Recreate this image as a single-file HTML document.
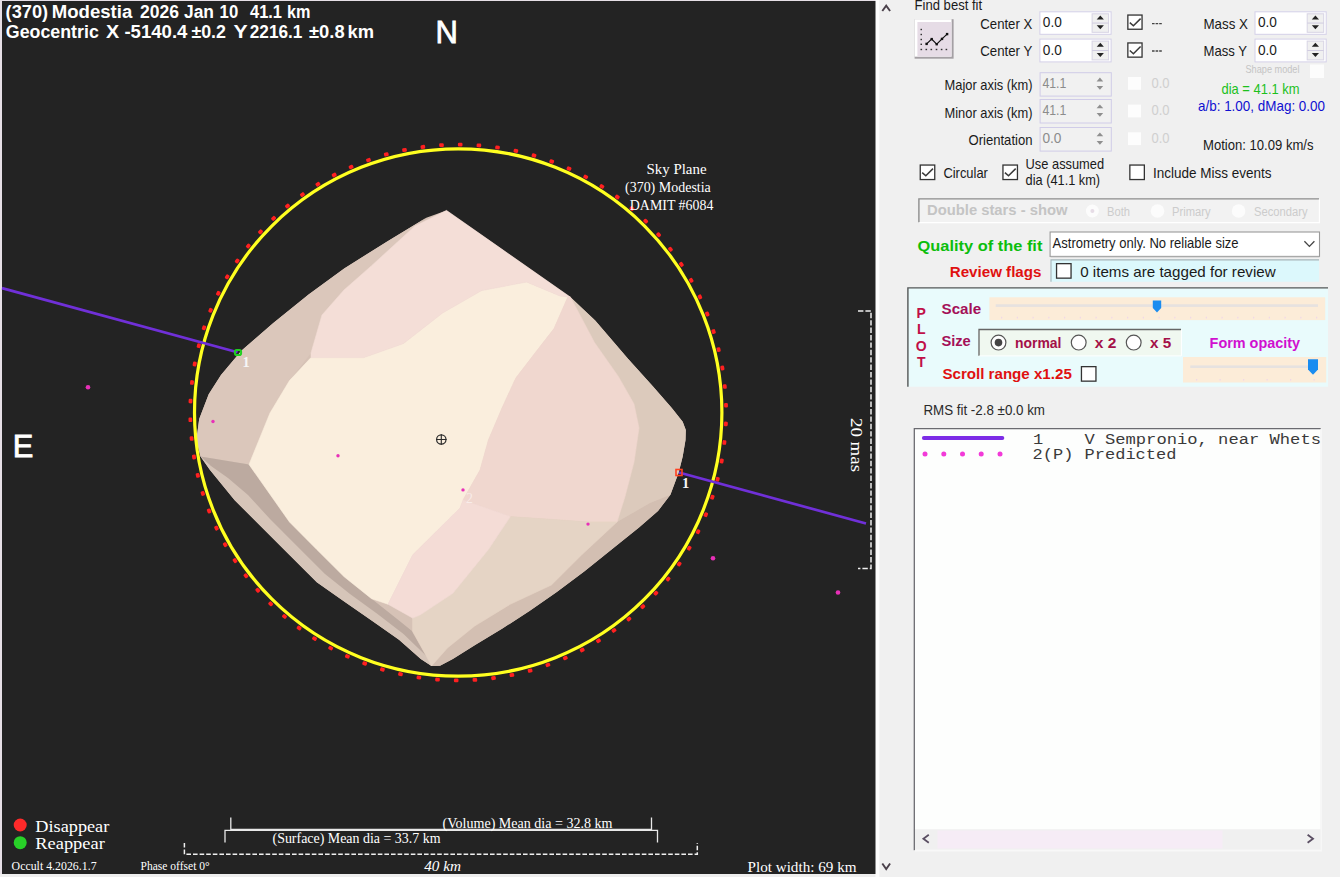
<!DOCTYPE html>
<html>
<head>
<meta charset="utf-8">
<title>Occult - Asteroid plot</title>
<style>
html,body{margin:0;padding:0;background:#f0f0f0;overflow:hidden;}
body{width:1340px;height:877px;position:relative;font-family:"Liberation Sans",sans-serif;}
svg{position:absolute;left:0;top:0;display:block;}
.ss{font-family:"Liberation Sans",sans-serif;}
.sf{font-family:"Liberation Serif",serif;}
.mo{font-family:"Liberation Mono",monospace;}
</style>
</head>
<body>
<svg width="1340" height="877" viewBox="0 0 1340 877">
<!-- ===== page background ===== -->
<rect x="0" y="0" width="1340" height="877" fill="#f0f0f0"/>
<!-- ===== plot background ===== -->
<rect x="2" y="1" width="874" height="873" fill="#232323"/>
<rect x="0" y="0" width="2" height="877" fill="#e6dfe6"/>
<rect x="0" y="0" width="876" height="1" fill="#e6dfe6"/>
<rect x="0" y="874" width="876" height="3" fill="#eeeeee"/>

<g shape-rendering="geometricPrecision">
<polygon points="446.5,210.4 502.0,249.3 570.5,297.2 595.2,320.4 628.0,358.7 652.6,386.0 671.8,408.0 682.7,421.7 685.8,430.0 685.5,440.0 682.7,456.4 678.6,472.8 670.4,494.7 658.0,511.0 639.0,527.6 611.6,549.5 584.2,571.4 556.8,592.0 529.5,611.0 502.0,628.8 474.7,645.3 452.8,659.0 440.0,665.8 431.5,666.0 420.8,659.0 399.0,639.8 371.6,620.6 344.2,601.5 316.8,582.3 289.5,555.0 262.0,527.6 234.7,500.2 210.0,470.0 200.5,456.4 196.4,440.0 199.2,419.0 208.7,394.3 221.0,375.0 241.6,350.5 273.0,323.2 308.6,294.4 344.2,268.4 388.0,241.0 426.3,217.8" fill="#d6c2b6"/>
<polygon points="200.5,456.4 196.4,440.0 199.2,419.0 208.7,394.3 221.0,375.0 241.6,350.5 273.0,323.2 308.6,294.4 344.2,268.4 388.0,241.0 426.3,217.8 415.0,226.0 371.6,265.7 344.0,290.0 322.0,315.0 311.0,353.0 289.5,380.6 270.0,413.0 259.0,440.0 249.0,464.5" fill="#dbc7bb"/>
<polygon points="431.5,666.0 420.8,659.0 399.0,639.8 371.6,620.6 344.2,601.5 316.8,582.3 289.5,555.0 262.0,527.6 234.7,500.2 210.0,470.0 200.5,456.4 249.0,464.5 289.5,522.0 316.8,549.5 344.2,576.8 371.6,598.7 399.0,620.6 412.6,631.6 426.3,656.0 431.5,666.0" fill="#d6c5b9"/>
<polygon points="200.5,456.4 249.0,464.5 289.5,522.0 316.8,549.5 344.2,576.8 371.6,598.7 399.0,620.6 412.6,631.6 426.3,656.0 403.5,634.0 377.5,614.0 350.0,594.0 325.0,574.0 297.7,546.7 270.0,519.0 248.0,495.0 228.0,478.0 211.0,466.0" fill="#bcaaa0"/>
<polygon points="670.4,494.7 658.0,511.0 639.0,527.6 611.6,549.5 584.2,571.4 556.8,592.0 529.5,611.0 502.0,628.8 474.7,645.3 452.8,659.0 440.0,665.8 431.5,666.0 431.5,666.0 447.4,648.0 474.7,626.0 510.3,604.2 551.4,585.0 581.5,555.0 617.0,522.0 650.0,503.0 670.4,494.7" fill="#d3bfb2"/>
<polygon points="570.5,297.2 595.2,320.4 628.0,358.7 652.6,386.0 671.8,408.0 682.7,421.7 685.8,430.0 685.5,440.0 682.7,456.4 678.6,472.8 670.4,494.7 650.0,503.0 617.0,522.0 625.0,496.6 634.0,462.0 639.0,428.0 634.0,404.0 618.5,376.7 594.5,342.5 570.5,297.2" fill="#dccabc"/>
<polygon points="249.0,464.5 259.0,440.0 270.0,413.0 289.5,380.6 311.0,357.6 364.0,357.6 403.5,343.6 442.6,313.0 481.7,290.6 526.4,282.0 560.0,296.0 567.8,297.0 554.0,328.6 535.0,353.0 515.8,378.0 502.0,408.0 488.4,440.0 480.0,470.0 463.0,500.0 460.0,508.0 412.6,555.0 388.0,604.2 371.6,598.7 344.2,576.8 316.8,549.5 289.5,522.0" fill="#faeedd" stroke="#faeedd" stroke-width="0.6"/>
<polygon points="415.0,226.0 446.5,210.4 502.0,249.3 570.5,297.2 560.0,296.0 526.4,282.0 481.7,290.6 442.6,313.0 403.5,343.6 364.0,357.6 311.0,357.6 311.0,353.0 322.0,315.0 344.0,290.0 371.6,265.7" fill="#f4ded7" stroke="#f4ded7" stroke-width="0.6"/>
<polygon points="570.5,297.2 567.8,297.0 554.0,328.6 535.0,353.0 515.8,378.0 502.0,408.0 488.4,440.0 480.0,470.0 463.0,500.0 510.3,516.6 590.0,522.0 617.0,522.0 625.0,496.6 634.0,462.0 639.0,428.0 634.0,404.0 618.5,376.7 594.5,342.5 570.5,297.2" fill="#f0d7cf" stroke="#f0d7cf" stroke-width="0.6"/>
<polygon points="510.3,516.6 590.0,522.0 617.0,522.0 581.5,555.0 551.4,585.0 510.3,604.2 474.7,626.0 447.4,648.0 431.5,666.0 426.3,656.0 412.6,631.6 412.6,618.0 420.0,615.0 452.8,593.3 488.4,549.5" fill="#e5d4c5" stroke="#e5d4c5" stroke-width="0.6"/>
<polygon points="463.0,500.0 510.3,516.6 488.4,549.5 452.8,593.3 420.0,615.0 412.6,618.0 388.0,604.2 412.6,555.0 460.0,508.0" fill="#f4dcd6" stroke="#f4dcd6" stroke-width="0.6"/>
</g>
<circle cx="458.2" cy="412.5" r="263.7" fill="none" stroke="#ffff20" stroke-width="3.2"/>
<rect x="457.9" y="142.7" width="4.6" height="3.8" rx="1.2" fill="#ff2020" transform="rotate(0.4 460.2 144.6)"/>
<rect x="439.2" y="143.2" width="4.6" height="3.8" rx="1.2" fill="#ff2020" transform="rotate(-3.6 441.5 145.1)"/>
<rect x="420.6" y="145.0" width="4.6" height="3.8" rx="1.2" fill="#ff2020" transform="rotate(-7.6 422.9 146.9)"/>
<rect x="402.2" y="148.1" width="4.6" height="3.8" rx="1.2" fill="#ff2020" transform="rotate(-11.6 404.5 150.0)"/>
<rect x="384.0" y="152.5" width="4.6" height="3.8" rx="1.2" fill="#ff2020" transform="rotate(-15.6 386.3 154.4)"/>
<rect x="366.2" y="158.2" width="4.6" height="3.8" rx="1.2" fill="#ff2020" transform="rotate(-19.6 368.5 160.1)"/>
<rect x="348.8" y="165.1" width="4.6" height="3.8" rx="1.2" fill="#ff2020" transform="rotate(-23.6 351.1 167.0)"/>
<rect x="331.9" y="173.1" width="4.6" height="3.8" rx="1.2" fill="#ff2020" transform="rotate(-27.6 334.2 175.0)"/>
<rect x="315.6" y="182.3" width="4.6" height="3.8" rx="1.2" fill="#ff2020" transform="rotate(-31.6 317.9 184.2)"/>
<rect x="300.1" y="192.7" width="4.6" height="3.8" rx="1.2" fill="#ff2020" transform="rotate(-35.6 302.4 194.6)"/>
<rect x="285.2" y="204.1" width="4.6" height="3.8" rx="1.2" fill="#ff2020" transform="rotate(-39.6 287.5 206.0)"/>
<rect x="271.3" y="216.5" width="4.6" height="3.8" rx="1.2" fill="#ff2020" transform="rotate(-43.6 273.6 218.4)"/>
<rect x="258.2" y="229.9" width="4.6" height="3.8" rx="1.2" fill="#ff2020" transform="rotate(-47.6 260.5 231.8)"/>
<rect x="246.0" y="244.1" width="4.6" height="3.8" rx="1.2" fill="#ff2020" transform="rotate(-51.6 248.3 246.0)"/>
<rect x="234.9" y="259.1" width="4.6" height="3.8" rx="1.2" fill="#ff2020" transform="rotate(-55.6 237.2 261.0)"/>
<rect x="224.9" y="274.9" width="4.6" height="3.8" rx="1.2" fill="#ff2020" transform="rotate(-59.6 227.2 276.8)"/>
<rect x="216.0" y="291.4" width="4.6" height="3.8" rx="1.2" fill="#ff2020" transform="rotate(-63.6 218.3 293.3)"/>
<rect x="208.3" y="308.4" width="4.6" height="3.8" rx="1.2" fill="#ff2020" transform="rotate(-67.6 210.6 310.3)"/>
<rect x="201.7" y="325.9" width="4.6" height="3.8" rx="1.2" fill="#ff2020" transform="rotate(-71.6 204.0 327.8)"/>
<rect x="196.5" y="343.8" width="4.6" height="3.8" rx="1.2" fill="#ff2020" transform="rotate(-75.6 198.8 345.7)"/>
<rect x="192.4" y="362.1" width="4.6" height="3.8" rx="1.2" fill="#ff2020" transform="rotate(-79.6 194.7 364.0)"/>
<rect x="189.7" y="380.6" width="4.6" height="3.8" rx="1.2" fill="#ff2020" transform="rotate(-83.6 192.0 382.5)"/>
<rect x="188.2" y="399.2" width="4.6" height="3.8" rx="1.2" fill="#ff2020" transform="rotate(-87.6 190.5 401.1)"/>
<rect x="188.1" y="417.9" width="4.6" height="3.8" rx="1.2" fill="#ff2020" transform="rotate(-91.6 190.4 419.8)"/>
<rect x="189.3" y="436.6" width="4.6" height="3.8" rx="1.2" fill="#ff2020" transform="rotate(-95.6 191.6 438.5)"/>
<rect x="191.7" y="455.1" width="4.6" height="3.8" rx="1.2" fill="#ff2020" transform="rotate(-99.6 194.0 457.0)"/>
<rect x="195.5" y="473.5" width="4.6" height="3.8" rx="1.2" fill="#ff2020" transform="rotate(-103.6 197.8 475.4)"/>
<rect x="200.5" y="491.5" width="4.6" height="3.8" rx="1.2" fill="#ff2020" transform="rotate(-107.6 202.8 493.4)"/>
<rect x="206.8" y="509.1" width="4.6" height="3.8" rx="1.2" fill="#ff2020" transform="rotate(-111.6 209.1 511.0)"/>
<rect x="214.2" y="526.2" width="4.6" height="3.8" rx="1.2" fill="#ff2020" transform="rotate(-115.6 216.5 528.1)"/>
<rect x="222.9" y="542.8" width="4.6" height="3.8" rx="1.2" fill="#ff2020" transform="rotate(-119.6 225.2 544.7)"/>
<rect x="232.7" y="558.7" width="4.6" height="3.8" rx="1.2" fill="#ff2020" transform="rotate(-123.6 235.0 560.6)"/>
<rect x="243.6" y="573.9" width="4.6" height="3.8" rx="1.2" fill="#ff2020" transform="rotate(-127.6 245.9 575.8)"/>
<rect x="255.5" y="588.4" width="4.6" height="3.8" rx="1.2" fill="#ff2020" transform="rotate(-131.6 257.8 590.3)"/>
<rect x="268.4" y="601.9" width="4.6" height="3.8" rx="1.2" fill="#ff2020" transform="rotate(-135.6 270.7 603.8)"/>
<rect x="282.2" y="614.5" width="4.6" height="3.8" rx="1.2" fill="#ff2020" transform="rotate(-139.6 284.5 616.4)"/>
<rect x="296.8" y="626.1" width="4.6" height="3.8" rx="1.2" fill="#ff2020" transform="rotate(-143.6 299.1 628.0)"/>
<rect x="312.2" y="636.7" width="4.6" height="3.8" rx="1.2" fill="#ff2020" transform="rotate(-147.6 314.5 638.6)"/>
<rect x="328.4" y="646.2" width="4.6" height="3.8" rx="1.2" fill="#ff2020" transform="rotate(-151.6 330.7 648.1)"/>
<rect x="345.1" y="654.5" width="4.6" height="3.8" rx="1.2" fill="#ff2020" transform="rotate(-155.6 347.4 656.4)"/>
<rect x="362.4" y="661.6" width="4.6" height="3.8" rx="1.2" fill="#ff2020" transform="rotate(-159.6 364.7 663.5)"/>
<rect x="380.1" y="667.6" width="4.6" height="3.8" rx="1.2" fill="#ff2020" transform="rotate(-163.6 382.4 669.5)"/>
<rect x="398.2" y="672.2" width="4.6" height="3.8" rx="1.2" fill="#ff2020" transform="rotate(-167.6 400.5 674.1)"/>
<rect x="416.6" y="675.6" width="4.6" height="3.8" rx="1.2" fill="#ff2020" transform="rotate(-171.6 418.9 677.5)"/>
<rect x="435.2" y="677.7" width="4.6" height="3.8" rx="1.2" fill="#ff2020" transform="rotate(-175.6 437.5 679.6)"/>
<rect x="453.9" y="678.5" width="4.6" height="3.8" rx="1.2" fill="#ff2020" transform="rotate(-179.6 456.2 680.4)"/>
<rect x="472.6" y="678.0" width="4.6" height="3.8" rx="1.2" fill="#ff2020" transform="rotate(-183.6 474.9 679.9)"/>
<rect x="491.2" y="676.2" width="4.6" height="3.8" rx="1.2" fill="#ff2020" transform="rotate(-187.6 493.5 678.1)"/>
<rect x="509.6" y="673.1" width="4.6" height="3.8" rx="1.2" fill="#ff2020" transform="rotate(-191.6 511.9 675.0)"/>
<rect x="527.8" y="668.7" width="4.6" height="3.8" rx="1.2" fill="#ff2020" transform="rotate(-195.6 530.1 670.6)"/>
<rect x="545.6" y="663.0" width="4.6" height="3.8" rx="1.2" fill="#ff2020" transform="rotate(-199.6 547.9 664.9)"/>
<rect x="563.0" y="656.1" width="4.6" height="3.8" rx="1.2" fill="#ff2020" transform="rotate(-203.6 565.3 658.0)"/>
<rect x="579.9" y="648.1" width="4.6" height="3.8" rx="1.2" fill="#ff2020" transform="rotate(-207.6 582.2 650.0)"/>
<rect x="596.2" y="638.9" width="4.6" height="3.8" rx="1.2" fill="#ff2020" transform="rotate(-211.6 598.5 640.8)"/>
<rect x="611.7" y="628.5" width="4.6" height="3.8" rx="1.2" fill="#ff2020" transform="rotate(-215.6 614.0 630.4)"/>
<rect x="626.6" y="617.1" width="4.6" height="3.8" rx="1.2" fill="#ff2020" transform="rotate(-219.6 628.9 619.0)"/>
<rect x="640.5" y="604.7" width="4.6" height="3.8" rx="1.2" fill="#ff2020" transform="rotate(-223.6 642.8 606.6)"/>
<rect x="653.6" y="591.3" width="4.6" height="3.8" rx="1.2" fill="#ff2020" transform="rotate(-227.6 655.9 593.2)"/>
<rect x="665.8" y="577.1" width="4.6" height="3.8" rx="1.2" fill="#ff2020" transform="rotate(-231.6 668.1 579.0)"/>
<rect x="676.9" y="562.1" width="4.6" height="3.8" rx="1.2" fill="#ff2020" transform="rotate(-235.6 679.2 564.0)"/>
<rect x="686.9" y="546.3" width="4.6" height="3.8" rx="1.2" fill="#ff2020" transform="rotate(-239.6 689.2 548.2)"/>
<rect x="695.8" y="529.8" width="4.6" height="3.8" rx="1.2" fill="#ff2020" transform="rotate(-243.6 698.1 531.7)"/>
<rect x="703.5" y="512.8" width="4.6" height="3.8" rx="1.2" fill="#ff2020" transform="rotate(-247.6 705.8 514.7)"/>
<rect x="710.1" y="495.3" width="4.6" height="3.8" rx="1.2" fill="#ff2020" transform="rotate(-251.6 712.4 497.2)"/>
<rect x="715.3" y="477.4" width="4.6" height="3.8" rx="1.2" fill="#ff2020" transform="rotate(-255.6 717.6 479.3)"/>
<rect x="719.4" y="459.1" width="4.6" height="3.8" rx="1.2" fill="#ff2020" transform="rotate(-259.6 721.7 461.0)"/>
<rect x="722.1" y="440.6" width="4.6" height="3.8" rx="1.2" fill="#ff2020" transform="rotate(-263.6 724.4 442.5)"/>
<rect x="723.6" y="422.0" width="4.6" height="3.8" rx="1.2" fill="#ff2020" transform="rotate(-267.6 725.9 423.9)"/>
<rect x="723.7" y="403.3" width="4.6" height="3.8" rx="1.2" fill="#ff2020" transform="rotate(-271.6 726.0 405.2)"/>
<rect x="722.5" y="384.6" width="4.6" height="3.8" rx="1.2" fill="#ff2020" transform="rotate(-275.6 724.8 386.5)"/>
<rect x="720.1" y="366.1" width="4.6" height="3.8" rx="1.2" fill="#ff2020" transform="rotate(-279.6 722.4 368.0)"/>
<rect x="716.3" y="347.7" width="4.6" height="3.8" rx="1.2" fill="#ff2020" transform="rotate(-283.6 718.6 349.6)"/>
<rect x="711.3" y="329.7" width="4.6" height="3.8" rx="1.2" fill="#ff2020" transform="rotate(-287.6 713.6 331.6)"/>
<rect x="705.0" y="312.1" width="4.6" height="3.8" rx="1.2" fill="#ff2020" transform="rotate(-291.6 707.3 314.0)"/>
<rect x="697.6" y="295.0" width="4.6" height="3.8" rx="1.2" fill="#ff2020" transform="rotate(-295.6 699.9 296.9)"/>
<rect x="688.9" y="278.4" width="4.6" height="3.8" rx="1.2" fill="#ff2020" transform="rotate(-299.6 691.2 280.3)"/>
<rect x="679.1" y="262.5" width="4.6" height="3.8" rx="1.2" fill="#ff2020" transform="rotate(-303.6 681.4 264.4)"/>
<rect x="668.2" y="247.3" width="4.6" height="3.8" rx="1.2" fill="#ff2020" transform="rotate(-307.6 670.5 249.2)"/>
<rect x="656.3" y="232.8" width="4.6" height="3.8" rx="1.2" fill="#ff2020" transform="rotate(-311.6 658.6 234.7)"/>
<rect x="643.4" y="219.3" width="4.6" height="3.8" rx="1.2" fill="#ff2020" transform="rotate(-315.6 645.7 221.2)"/>
<rect x="629.6" y="206.7" width="4.6" height="3.8" rx="1.2" fill="#ff2020" transform="rotate(-319.6 631.9 208.6)"/>
<rect x="615.0" y="195.1" width="4.6" height="3.8" rx="1.2" fill="#ff2020" transform="rotate(-323.6 617.3 197.0)"/>
<rect x="599.6" y="184.5" width="4.6" height="3.8" rx="1.2" fill="#ff2020" transform="rotate(-327.6 601.9 186.4)"/>
<rect x="583.4" y="175.0" width="4.6" height="3.8" rx="1.2" fill="#ff2020" transform="rotate(-331.6 585.7 176.9)"/>
<rect x="566.7" y="166.7" width="4.6" height="3.8" rx="1.2" fill="#ff2020" transform="rotate(-335.6 569.0 168.6)"/>
<rect x="549.4" y="159.6" width="4.6" height="3.8" rx="1.2" fill="#ff2020" transform="rotate(-339.6 551.7 161.5)"/>
<rect x="531.7" y="153.6" width="4.6" height="3.8" rx="1.2" fill="#ff2020" transform="rotate(-343.6 534.0 155.5)"/>
<rect x="513.6" y="149.0" width="4.6" height="3.8" rx="1.2" fill="#ff2020" transform="rotate(-347.6 515.9 150.9)"/>
<rect x="495.2" y="145.6" width="4.6" height="3.8" rx="1.2" fill="#ff2020" transform="rotate(-351.6 497.5 147.5)"/>
<rect x="476.6" y="143.5" width="4.6" height="3.8" rx="1.2" fill="#ff2020" transform="rotate(-355.6 478.9 145.4)"/>
<line x1="2" y1="288.1" x2="237.5" y2="352.2" stroke="#7030d8" stroke-width="2.7"/>
<line x1="679" y1="472.5" x2="866" y2="523.5" stroke="#7030d8" stroke-width="2.7"/>
<rect x="234.9" y="349.9" width="6.2" height="5.2" rx="1.8" fill="none" stroke="#20d020" stroke-width="2"/>
<rect x="676" y="469.5" width="6" height="6" fill="none" stroke="#ff4020" stroke-width="1.6"/>
<circle cx="88.0" cy="387.3" r="2.3" fill="#e830b8"/>
<circle cx="213.0" cy="421.5" r="1.7" fill="#e830b8"/>
<circle cx="338.0" cy="455.7" r="1.7" fill="#e830b8"/>
<circle cx="463.0" cy="489.9" r="1.7" fill="#e830b8"/>
<circle cx="588.0" cy="524.1" r="1.7" fill="#e830b8"/>
<circle cx="713.0" cy="558.3" r="2.3" fill="#e830b8"/>
<circle cx="838.0" cy="592.5" r="2.3" fill="#e830b8"/>
<text x="5.6" y="17.7" class="ss" font-size="17.5" fill="#fff" textLength="42.5" lengthAdjust="spacingAndGlyphs" font-weight="bold">(370)</text>
<text x="51.8" y="17.7" class="ss" font-size="17.5" fill="#fff" textLength="80.5" lengthAdjust="spacingAndGlyphs" font-weight="bold">Modestia</text>
<text x="140" y="17.7" class="ss" font-size="17.5" fill="#fff" textLength="39" lengthAdjust="spacingAndGlyphs" font-weight="bold">2026</text>
<text x="184" y="17.7" class="ss" font-size="17.5" fill="#fff" textLength="30" lengthAdjust="spacingAndGlyphs" font-weight="bold">Jan</text>
<text x="219.6" y="17.7" class="ss" font-size="17.5" fill="#fff" textLength="18.6" lengthAdjust="spacingAndGlyphs" font-weight="bold">10</text>
<text x="250" y="17.7" class="ss" font-size="17.5" fill="#fff" textLength="32" lengthAdjust="spacingAndGlyphs" font-weight="bold">41.1</text>
<text x="287" y="17.7" class="ss" font-size="17.5" fill="#fff" textLength="23.5" lengthAdjust="spacingAndGlyphs" font-weight="bold">km</text>
<text x="5.8" y="37.7" class="ss" font-size="17.5" fill="#fff" textLength="93" lengthAdjust="spacingAndGlyphs" font-weight="bold">Geocentric</text>
<text x="106" y="37.7" class="ss" font-size="17.5" fill="#fff" textLength="13.2" lengthAdjust="spacingAndGlyphs" font-weight="bold">X</text>
<text x="124.4" y="37.7" class="ss" font-size="17.5" fill="#fff" textLength="63" lengthAdjust="spacingAndGlyphs" font-weight="bold">-5140.4</text>
<text x="191.4" y="37.7" class="ss" font-size="17.5" fill="#fff" textLength="34.6" lengthAdjust="spacingAndGlyphs" font-weight="bold">±0.2</text>
<text x="233.4" y="37.7" class="ss" font-size="17.5" fill="#fff" textLength="14.2" lengthAdjust="spacingAndGlyphs" font-weight="bold">Y</text>
<text x="249.8" y="37.7" class="ss" font-size="17.5" fill="#fff" textLength="52.6" lengthAdjust="spacingAndGlyphs" font-weight="bold">2216.1</text>
<text x="309" y="37.7" class="ss" font-size="17.5" fill="#fff" textLength="35.6" lengthAdjust="spacingAndGlyphs" font-weight="bold">±0.8</text>
<text x="347.6" y="37.7" class="ss" font-size="17.5" fill="#fff" textLength="26.5" lengthAdjust="spacingAndGlyphs" font-weight="bold">km</text>
<text x="435.4" y="43.3" class="ss" font-size="31" fill="#fff" textLength="22.4" lengthAdjust="spacingAndGlyphs" stroke="#fff" stroke-width="0.8">N</text>
<text x="12.7" y="457.2" class="ss" font-size="31" fill="#fff" textLength="20.6" lengthAdjust="spacingAndGlyphs" stroke="#fff" stroke-width="0.8">E</text>
<text x="646.5" y="173.5" class="sf" font-size="14" fill="#fff" textLength="60" lengthAdjust="spacingAndGlyphs">Sky Plane</text>
<text x="625" y="191.8" class="sf" font-size="14" fill="#fff" textLength="85.8" lengthAdjust="spacingAndGlyphs">(370) Modestia</text>
<text x="629.8" y="209.5" class="sf" font-size="14" fill="#fff" textLength="83.6" lengthAdjust="spacingAndGlyphs">DAMIT #6084</text>
<text x="242.4" y="367.2" class="sf" font-size="14.5" fill="#f6f6f6" font-weight="bold">1</text>
<text x="682" y="488.4" class="sf" font-size="14.5" fill="#f6f6f6" font-weight="bold">1</text>
<text x="466" y="503" class="sf" font-size="14" fill="#ffffff" fill-opacity="0.5">2</text>
<circle cx="20.2" cy="825" r="6.5" fill="#ff2a2a"/>
<circle cx="20.2" cy="842.7" r="6.5" fill="#28d028"/>
<text x="35.3" y="831.8" class="sf" font-size="17.5" fill="#fff" textLength="74" lengthAdjust="spacingAndGlyphs">Disappear</text>
<text x="35.3" y="849.4" class="sf" font-size="17.5" fill="#fff" textLength="69.5" lengthAdjust="spacingAndGlyphs">Reappear</text>
<text x="11.6" y="869.7" class="sf" font-size="12" fill="#fff" textLength="85" lengthAdjust="spacingAndGlyphs">Occult 4.2026.1.7</text>
<text x="140.6" y="869.8" class="sf" font-size="12" fill="#fff" textLength="69" lengthAdjust="spacingAndGlyphs">Phase offset 0°</text>
<path d="M230.8 817.5V829.3H651.5V817.5" fill="none" stroke="#e8e8e8" stroke-width="1.3"/>
<path d="M225 842.5V830.3H657.5V842.5" fill="none" stroke="#e8e8e8" stroke-width="1.3"/>
<text x="442.5" y="827.5" class="sf" font-size="14" fill="#fff" textLength="170" lengthAdjust="spacingAndGlyphs">(Volume) Mean dia = 32.8 km</text>
<text x="272.5" y="843" class="sf" font-size="14" fill="#fff" textLength="168" lengthAdjust="spacingAndGlyphs">(Surface) Mean dia = 33.7 km</text>
<path d="M184.4 843V854.2H697.3V843" fill="none" stroke="#f0f0f0" stroke-width="1.5" stroke-dasharray="4.6 2"/>
<text x="424.2" y="870.8" class="sf" font-size="15" fill="#fff" textLength="36.8" lengthAdjust="spacingAndGlyphs" font-style="italic">40 km</text>
<text x="747.5" y="871.6" class="sf" font-size="15" fill="#fff" textLength="109" lengthAdjust="spacingAndGlyphs">Plot width: 69 km</text>
<path d="M858 311H871V568.6H858" fill="none" stroke="#f0f0f0" stroke-width="1.5" stroke-dasharray="5.4 2"/>
<text class="sf" font-size="17" fill="#fff" transform="translate(851,418) rotate(90)" textLength="54" lengthAdjust="spacingAndGlyphs">20 mas</text>
<circle cx="441.3" cy="439.5" r="4.7" fill="none" stroke="#2a2a2a" stroke-width="1.2"/><path d="M436 439.5H446.6M441.3 434.2V444.8" stroke="#2a2a2a" stroke-width="1.1"/>

<rect x="875.5" y="0" width="3.8" height="877" fill="#fdfdfd"/>
<path d="M882.3 11L886.2 5.6L890.1 11" fill="none" stroke="#4a404a" stroke-width="1.9"/>
<path d="M882.3 863.5L886.2 869L890.1 863.5" fill="none" stroke="#4a404a" stroke-width="1.9"/>
<text x="914.6" y="10" class="ss" font-size="14.5" fill="#1a1a1a" textLength="67.5" lengthAdjust="spacingAndGlyphs">Find best fit</text>
<rect x="914.6" y="19.2" width="39" height="39.5" fill="#a4a0a4"/>
<rect x="914.6" y="19.2" width="37" height="37.5" fill="#ffffff"/>
<rect x="917.4" y="22" width="34" height="34.5" fill="#e6dce6"/>
<path d="M926.6 43.9L931.7 39.1L936.7 44.2L942 38.9L947.1 34.1" fill="none" stroke="#111" stroke-width="1.2"/>
<rect x="925.4" y="42.699999999999996" width="2.4" height="2.4" fill="#111"/>
<rect x="930.5" y="37.9" width="2.4" height="2.4" fill="#111"/>
<rect x="935.5" y="43.0" width="2.4" height="2.4" fill="#111"/>
<rect x="940.8" y="37.699999999999996" width="2.4" height="2.4" fill="#111"/>
<rect x="945.9" y="32.9" width="2.4" height="2.4" fill="#111"/>
<rect x="920.5" y="28.8" width="1.5" height="1.4" fill="#333"/>
<rect x="920.5" y="33.8" width="1.5" height="1.4" fill="#333"/>
<rect x="920.5" y="38.8" width="1.5" height="1.4" fill="#333"/>
<rect x="920.5" y="43.599999999999994" width="1.5" height="1.4" fill="#333"/>
<rect x="920.5" y="48.8" width="1.6" height="1.4" fill="#333"/>
<rect x="925.5" y="48.8" width="1.6" height="1.4" fill="#333"/>
<rect x="930.5" y="48.8" width="1.6" height="1.4" fill="#333"/>
<rect x="935.6999999999999" y="48.8" width="1.6" height="1.4" fill="#333"/>
<rect x="940.8" y="48.8" width="1.6" height="1.4" fill="#333"/>
<rect x="945.5999999999999" y="48.8" width="1.6" height="1.4" fill="#333"/>
<text x="1032.3" y="28.6" class="ss" font-size="14.5" fill="#1a1a1a" textLength="52" lengthAdjust="spacingAndGlyphs" text-anchor="end">Center X</text>
<text x="1032.3" y="56" class="ss" font-size="14.5" fill="#1a1a1a" textLength="52" lengthAdjust="spacingAndGlyphs" text-anchor="end">Center Y</text>
<text x="1032.5" y="90.3" class="ss" font-size="14.5" fill="#1a1a1a" textLength="88" lengthAdjust="spacingAndGlyphs" text-anchor="end">Major axis (km)</text>
<text x="1032.5" y="117.6" class="ss" font-size="14.5" fill="#1a1a1a" textLength="88" lengthAdjust="spacingAndGlyphs" text-anchor="end">Minor axis (km)</text>
<text x="1032.5" y="144.5" class="ss" font-size="14.5" fill="#1a1a1a" textLength="64" lengthAdjust="spacingAndGlyphs" text-anchor="end">Orientation</text>
<rect x="1039.9" y="11.8" width="71.2" height="22.5" fill="#fff" stroke="#d4d0e8" stroke-width="1"/><rect x="1092.1000000000001" y="13.8" width="16.5" height="18.5" fill="#f0f0f0" stroke="#d8d4e4" stroke-width="1"/><line x1="1092.1000000000001" y1="23.05" x2="1108.6000000000001" y2="23.05" stroke="#d0cce0" stroke-width="1"/><path d="M1096.7000000000003 19.5L1100.3000000000002 15.5L1103.9 19.5Z" fill="#222"/><path d="M1096.7000000000003 25.299999999999997L1100.3000000000002 29.299999999999997L1103.9 25.299999999999997Z" fill="#222"/><text x="1042.8000000000002" y="26.999999999999996" class="ss" font-size="15.5" fill="#1c1c1c" textLength="19" lengthAdjust="spacingAndGlyphs">0.0</text>
<rect x="1039.9" y="39.1" width="71.2" height="22.8" fill="#fff" stroke="#d4d0e8" stroke-width="1"/><rect x="1092.1000000000001" y="41.1" width="16.5" height="18.8" fill="#f0f0f0" stroke="#d8d4e4" stroke-width="1"/><line x1="1092.1000000000001" y1="50.5" x2="1108.6000000000001" y2="50.5" stroke="#d0cce0" stroke-width="1"/><path d="M1096.7000000000003 46.8L1100.3000000000002 42.800000000000004L1103.9 46.8Z" fill="#222"/><path d="M1096.7000000000003 52.900000000000006L1100.3000000000002 56.900000000000006L1103.9 52.900000000000006Z" fill="#222"/><text x="1042.8000000000002" y="54.60000000000001" class="ss" font-size="15.5" fill="#1c1c1c" textLength="19" lengthAdjust="spacingAndGlyphs">0.0</text>
<rect x="1040.1" y="72.7" width="71.2" height="23.4" fill="#f1f1f1" stroke="#d0cce8" stroke-width="1"/><path d="M1096.6 81.4L1099.8999999999999 77.60000000000001L1103.1999999999998 81.4Z" fill="#8f8f8f"/><path d="M1096.6 86.0L1099.8999999999999 89.8L1103.1999999999998 86.0Z" fill="#8f8f8f"/><text x="1042.3999999999999" y="88.19999999999999" class="ss" font-size="14.5" fill="#8c8c8c" textLength="24" lengthAdjust="spacingAndGlyphs">41.1</text>
<rect x="1040.1" y="99.5" width="71.2" height="23.5" fill="#f1f1f1" stroke="#d0cce8" stroke-width="1"/><path d="M1096.6 108.2L1099.8999999999999 104.4L1103.1999999999998 108.2Z" fill="#8f8f8f"/><path d="M1096.6 112.9L1099.8999999999999 116.7L1103.1999999999998 112.9Z" fill="#8f8f8f"/><text x="1042.3999999999999" y="115.1" class="ss" font-size="14.5" fill="#8c8c8c" textLength="24" lengthAdjust="spacingAndGlyphs">41.1</text>
<rect x="1040.1" y="127.5" width="71.2" height="23.6" fill="#f1f1f1" stroke="#d0cce8" stroke-width="1"/><path d="M1096.6 136.2L1099.8999999999999 132.4L1103.1999999999998 136.2Z" fill="#8f8f8f"/><path d="M1096.6 141.0L1099.8999999999999 144.79999999999998L1103.1999999999998 141.0Z" fill="#8f8f8f"/><text x="1042.3999999999999" y="143.2" class="ss" font-size="14.5" fill="#8c8c8c" textLength="19" lengthAdjust="spacingAndGlyphs">0.0</text>
<rect x="1127.8500000000001" y="15.05" width="14.2" height="14.2" fill="#fff" stroke="#333" stroke-width="1.3"/><path d="M1129.8 22.6L1133.4 25.8L1140.6000000000001 18.6" fill="none" stroke="#3a3a3a" stroke-width="1.5"/>
<rect x="1127.8500000000001" y="42.949999999999996" width="14.2" height="14.2" fill="#fff" stroke="#333" stroke-width="1.3"/><path d="M1129.8 50.5L1133.4 53.699999999999996L1140.6000000000001 46.5" fill="none" stroke="#3a3a3a" stroke-width="1.5"/>
<path d="M1152 23.6H1162M1152 51H1162" stroke="#444" stroke-width="1.3" stroke-dasharray="2.6 1"/>
<rect x="1128" y="77" width="13" height="12.8" fill="#fdfdfd"/>
<rect x="1128" y="104.6" width="13" height="12.8" fill="#fdfdfd"/>
<rect x="1128" y="132.3" width="13" height="12.8" fill="#fdfdfd"/>
<text x="1151.5" y="88.3" class="ss" font-size="14.5" fill="#cfcfcf" textLength="18" lengthAdjust="spacingAndGlyphs">0.0</text>
<text x="1151.5" y="115" class="ss" font-size="14.5" fill="#cfcfcf" textLength="18" lengthAdjust="spacingAndGlyphs">0.0</text>
<text x="1151.5" y="142.6" class="ss" font-size="14.5" fill="#cfcfcf" textLength="18" lengthAdjust="spacingAndGlyphs">0.0</text>
<text x="1248" y="28.6" class="ss" font-size="14.5" fill="#1a1a1a" textLength="44.5" lengthAdjust="spacingAndGlyphs" text-anchor="end">Mass X</text>
<text x="1247" y="56" class="ss" font-size="14.5" fill="#1a1a1a" textLength="43.5" lengthAdjust="spacingAndGlyphs" text-anchor="end">Mass Y</text>
<rect x="1255.0" y="11.8" width="71.2" height="22.5" fill="#fff" stroke="#d4d0e8" stroke-width="1"/><rect x="1307.2" y="13.8" width="16.5" height="18.5" fill="#f0f0f0" stroke="#d8d4e4" stroke-width="1"/><line x1="1307.2" y1="23.05" x2="1323.7" y2="23.05" stroke="#d0cce0" stroke-width="1"/><path d="M1311.8000000000002 19.5L1315.4 15.5L1319.0 19.5Z" fill="#222"/><path d="M1311.8000000000002 25.299999999999997L1315.4 29.299999999999997L1319.0 25.299999999999997Z" fill="#222"/><text x="1257.9" y="26.999999999999996" class="ss" font-size="15.5" fill="#1c1c1c" textLength="19" lengthAdjust="spacingAndGlyphs">0.0</text>
<rect x="1255.0" y="39.1" width="71.2" height="22.8" fill="#fff" stroke="#d4d0e8" stroke-width="1"/><rect x="1307.2" y="41.1" width="16.5" height="18.8" fill="#f0f0f0" stroke="#d8d4e4" stroke-width="1"/><line x1="1307.2" y1="50.5" x2="1323.7" y2="50.5" stroke="#d0cce0" stroke-width="1"/><path d="M1311.8000000000002 46.8L1315.4 42.800000000000004L1319.0 46.8Z" fill="#222"/><path d="M1311.8000000000002 52.900000000000006L1315.4 56.900000000000006L1319.0 52.900000000000006Z" fill="#222"/><text x="1257.9" y="54.60000000000001" class="ss" font-size="15.5" fill="#1c1c1c" textLength="19" lengthAdjust="spacingAndGlyphs">0.0</text>
<text x="1299.5" y="73" class="ss" font-size="10.5" fill="#c4c4c4" textLength="54" lengthAdjust="spacingAndGlyphs" text-anchor="end">Shape model</text>
<rect x="1310" y="64.5" width="14" height="13.5" fill="#fcfcfc"/>
<text x="1260.5" y="94.3" class="ss" font-size="14.5" fill="#1cc01c" textLength="78" lengthAdjust="spacingAndGlyphs" text-anchor="middle">dia = 41.1 km</text>
<text x="1198" y="111" class="ss" font-size="14.5" fill="#1010d0" textLength="127" lengthAdjust="spacingAndGlyphs">a/b: 1.00, dMag: 0.00</text>
<text x="1203" y="149.6" class="ss" font-size="14.5" fill="#1a1a1a" textLength="110.5" lengthAdjust="spacingAndGlyphs">Motion: 10.09 km/s</text>
<rect x="920.25" y="165.05" width="14.5" height="14.5" fill="#fff" stroke="#333" stroke-width="1.3"/><path d="M922.2 172.6L925.8000000000001 175.8L933.0 168.6" fill="none" stroke="#3a3a3a" stroke-width="1.5"/>
<text x="943.4" y="177.7" class="ss" font-size="14.5" fill="#1a1a1a" textLength="44.5" lengthAdjust="spacingAndGlyphs">Circular</text>
<rect x="1002.9499999999999" y="165.05" width="14.5" height="14.5" fill="#fff" stroke="#333" stroke-width="1.3"/><path d="M1004.9 172.6L1008.5 175.8L1015.6999999999999 168.6" fill="none" stroke="#3a3a3a" stroke-width="1.5"/>
<text x="1025.6" y="169.3" class="ss" font-size="14.5" fill="#1a1a1a" textLength="78.5" lengthAdjust="spacingAndGlyphs">Use assumed</text>
<text x="1025.6" y="185.3" class="ss" font-size="14.5" fill="#1a1a1a" textLength="74.5" lengthAdjust="spacingAndGlyphs">dia (41.1 km)</text>
<rect x="1129.8500000000001" y="165.05" width="14.5" height="14.5" fill="#fff" stroke="#333" stroke-width="1.3"/>
<text x="1153" y="177.7" class="ss" font-size="14.5" fill="#1a1a1a" textLength="118.5" lengthAdjust="spacingAndGlyphs">Include Miss events</text>
<rect x="918.2" y="198.3" width="401" height="24" fill="#f2f2f2"/>
<path d="M918.9 222.3V198.9H1319" fill="none" stroke="#8c8c8c" stroke-width="1.4"/>
<path d="M919.5 222.6H1319.4V199.5" fill="none" stroke="#ffffff" stroke-width="1.2"/>
<text x="927" y="214.7" class="ss" font-size="14.5" fill="#c4c4c4" textLength="140.5" lengthAdjust="spacingAndGlyphs" font-weight="bold">Double stars - show</text>
<circle cx="1092.4" cy="211" r="6.5" fill="#fcfcfc"/>
<circle cx="1092.4" cy="211" r="2" fill="#e6dce6"/>
<text x="1107" y="216" class="ss" font-size="12.5" fill="#cccccc" textLength="23" lengthAdjust="spacingAndGlyphs">Both</text>
<circle cx="1157.5" cy="211" r="6.8" fill="#fcfcfc"/>
<text x="1172" y="216" class="ss" font-size="12.5" fill="#cccccc" textLength="38.5" lengthAdjust="spacingAndGlyphs">Primary</text>
<circle cx="1238.6" cy="211" r="6.8" fill="#fcfcfc"/>
<text x="1254" y="216" class="ss" font-size="12.5" fill="#cccccc" textLength="53.5" lengthAdjust="spacingAndGlyphs">Secondary</text>
<text x="917.6" y="251.4" class="ss" font-size="14" fill="#0cbe0c" textLength="124.8" lengthAdjust="spacingAndGlyphs" font-weight="bold">Quality of the fit</text>
<rect x="1050.1" y="232" width="269.4" height="24.4" fill="#fff" stroke="#9a9a9a" stroke-width="1.1"/>
<path d="M1050.5 257.3H1319.5" stroke="#d8d8d8" stroke-width="1"/>
<text x="1052.6" y="247.6" class="ss" font-size="14.5" fill="#1a1a1a" textLength="186" lengthAdjust="spacingAndGlyphs">Astrometry only. No reliable size</text>
<path d="M1304.4 241.2L1309.4 246.4L1314.4 241.2" fill="none" stroke="#444" stroke-width="1.3"/>
<text x="949.8" y="276.8" class="ss" font-size="14" fill="#e01010" textLength="91.6" lengthAdjust="spacingAndGlyphs" font-weight="bold">Review flags</text>
<rect x="1050.5" y="259.4" width="268.6" height="22.4" fill="#dcf8fc"/>
<path d="M1051 281.8V259.9H1319" fill="none" stroke="#a8b4b8" stroke-width="1.1"/>
<rect x="1056.5500000000002" y="263.65" width="14.5" height="14.5" fill="#fff" stroke="#333" stroke-width="1.3"/>
<text x="1080.2" y="276.6" class="ss" font-size="15" fill="#1a1a1a" textLength="195.5" lengthAdjust="spacingAndGlyphs">0 items are tagged for review</text>
<rect x="907.3" y="287.3" width="420.7" height="99.4" fill="#e9fbfc"/>
<path d="M907.9 386.7V287.9H1328" fill="none" stroke="#555" stroke-width="1.4"/>
<text x="921.2" y="318.3" class="ss" font-size="14" fill="#c01048" font-weight="bold" text-anchor="middle">P</text>
<text x="921.2" y="334" class="ss" font-size="14" fill="#c01048" font-weight="bold" text-anchor="middle">L</text>
<text x="921.2" y="351" class="ss" font-size="14" fill="#c01048" font-weight="bold" text-anchor="middle">O</text>
<text x="921.2" y="367.2" class="ss" font-size="14" fill="#c01048" font-weight="bold" text-anchor="middle">T</text>
<text x="941.6" y="313.7" class="ss" font-size="14.5" fill="#a41058" textLength="39.6" lengthAdjust="spacingAndGlyphs" font-weight="bold">Scale</text>
<rect x="989.4" y="297.3" width="335.8" height="22.8" fill="#fcecd8"/><rect x="995.7" y="304.3" width="322.29999999999995" height="2.6" fill="#e6e2e0"/><path d="M1152.8 300.4h8.4v7.699999999999999l-4.2 4.5l-4.2 -4.5z" fill="#1a8cf0"/>
<rect x="1001.0" y="316.8" width="1.2" height="1.6" fill="#f0d8e8"/>
<rect x="1016.8" y="316.8" width="1.2" height="1.6" fill="#f0d8e8"/>
<rect x="1032.5" y="316.8" width="1.2" height="1.6" fill="#f0d8e8"/>
<rect x="1048.2" y="316.8" width="1.2" height="1.6" fill="#f0d8e8"/>
<rect x="1064.0" y="316.8" width="1.2" height="1.6" fill="#f0d8e8"/>
<rect x="1079.8" y="316.8" width="1.2" height="1.6" fill="#f0d8e8"/>
<rect x="1095.5" y="316.8" width="1.2" height="1.6" fill="#f0d8e8"/>
<rect x="1111.2" y="316.8" width="1.2" height="1.6" fill="#f0d8e8"/>
<rect x="1127.0" y="316.8" width="1.2" height="1.6" fill="#f0d8e8"/>
<rect x="1142.8" y="316.8" width="1.2" height="1.6" fill="#f0d8e8"/>
<rect x="1158.5" y="316.8" width="1.2" height="1.6" fill="#f0d8e8"/>
<rect x="1174.2" y="316.8" width="1.2" height="1.6" fill="#f0d8e8"/>
<rect x="1190.0" y="316.8" width="1.2" height="1.6" fill="#f0d8e8"/>
<rect x="1205.8" y="316.8" width="1.2" height="1.6" fill="#f0d8e8"/>
<rect x="1221.5" y="316.8" width="1.2" height="1.6" fill="#f0d8e8"/>
<rect x="1237.2" y="316.8" width="1.2" height="1.6" fill="#f0d8e8"/>
<rect x="1253.0" y="316.8" width="1.2" height="1.6" fill="#f0d8e8"/>
<rect x="1268.8" y="316.8" width="1.2" height="1.6" fill="#f0d8e8"/>
<rect x="1284.5" y="316.8" width="1.2" height="1.6" fill="#f0d8e8"/>
<rect x="1300.2" y="316.8" width="1.2" height="1.6" fill="#f0d8e8"/>
<rect x="1316.0" y="316.8" width="1.2" height="1.6" fill="#f0d8e8"/>
<text x="941.4" y="346.2" class="ss" font-size="14.5" fill="#a41058" textLength="29.4" lengthAdjust="spacingAndGlyphs" font-weight="bold">Size</text>
<rect x="978.4" y="328.9" width="202.8" height="26.8" fill="#f0f8f0"/>
<path d="M979 355.7V329.5H1181" fill="none" stroke="#666" stroke-width="1.3"/>
<path d="M979.5 355.9H1181.4V330" fill="none" stroke="#fff" stroke-width="1"/>
<circle cx="998.5" cy="342.6" r="7.4" fill="#fff" stroke="#555" stroke-width="1.2"/><circle cx="998.5" cy="342.6" r="3.8" fill="#444"/>
<text x="1015" y="347.5" class="ss" font-size="14.5" fill="#a41048" textLength="46.4" lengthAdjust="spacingAndGlyphs" font-weight="bold">normal</text>
<circle cx="1078.7" cy="342.6" r="7.4" fill="#fff" stroke="#555" stroke-width="1.2"/>
<text x="1094.8" y="347.5" class="ss" font-size="14.5" fill="#a41048" textLength="21.6" lengthAdjust="spacingAndGlyphs" font-weight="bold">x 2</text>
<circle cx="1133.7" cy="342.6" r="7.4" fill="#fff" stroke="#555" stroke-width="1.2"/>
<text x="1150" y="347.5" class="ss" font-size="14.5" fill="#a41048" textLength="21.2" lengthAdjust="spacingAndGlyphs" font-weight="bold">x 5</text>
<text x="1209.6" y="347.5" class="ss" font-size="14.5" fill="#d010d0" textLength="90.4" lengthAdjust="spacingAndGlyphs" font-weight="bold">Form opacity</text>
<rect x="1183" y="357" width="143.2" height="25.5" fill="#fcecd8"/><rect x="1190.3" y="365.40000000000003" width="117.70000000000005" height="2.6" fill="#e6e2e0"/><path d="M1308 359.3h10v10.2l-5.0 5.3l-5.0 -5.3z" fill="#1a8cf0"/>
<rect x="1196.0" y="379" width="1.2" height="1.6" fill="#f0d8e8"/>
<rect x="1219.5" y="379" width="1.2" height="1.6" fill="#f0d8e8"/>
<rect x="1243.0" y="379" width="1.2" height="1.6" fill="#f0d8e8"/>
<rect x="1266.5" y="379" width="1.2" height="1.6" fill="#f0d8e8"/>
<rect x="1290.0" y="379" width="1.2" height="1.6" fill="#f0d8e8"/>
<rect x="1313.5" y="379" width="1.2" height="1.6" fill="#f0d8e8"/>
<text x="942.4" y="378.5" class="ss" font-size="14.5" fill="#e01010" textLength="129.4" lengthAdjust="spacingAndGlyphs" font-weight="bold">Scroll range x1.25</text>
<rect x="1081.45" y="366.65" width="14.5" height="14.5" fill="#fff" stroke="#333" stroke-width="1.3"/>
<text x="923.4" y="415" class="ss" font-size="14.5" fill="#2a2a2a" textLength="121.6" lengthAdjust="spacingAndGlyphs">RMS fit -2.8 ±0.0 km</text>
<rect x="913.7" y="428" width="406.8" height="422.2" fill="#fdfefd"/>
<path d="M914.3 850.2V428.7H1320.7" fill="none" stroke="#6a6a70" stroke-width="1.3"/>
<path d="M914.8 850.8H1321.2V429" fill="none" stroke="#f8f8f8" stroke-width="1.4"/>
<clipPath id="lb"><rect x="915" y="430" width="405.5" height="420"/></clipPath>
<g clip-path="url(#lb)">
<rect x="921.9" y="435.9" width="82.4" height="4.2" rx="2" fill="#7c2ce6"/>
<text x="1033" y="443.8" class="mo" font-size="14.5" fill="#3a3a3a" textLength="10.2" lengthAdjust="spacingAndGlyphs">1</text>
<text x="1084.4" y="443.8" class="mo" font-size="14.5" fill="#3a3a3a" textLength="236.6" lengthAdjust="spacingAndGlyphs">V Sempronio, near Whets</text>
<circle cx="925.0" cy="454" r="2.5" fill="#f23ad8"/>
<circle cx="943.8" cy="454" r="2.5" fill="#f23ad8"/>
<circle cx="962.5" cy="454" r="2.5" fill="#f23ad8"/>
<circle cx="981.2" cy="454" r="2.5" fill="#f23ad8"/>
<circle cx="1000.0" cy="454" r="2.5" fill="#f23ad8"/>
<text x="1032.6" y="459.1" class="mo" font-size="14.5" fill="#3a3a3a" textLength="40.8" lengthAdjust="spacingAndGlyphs">2(P)</text>
<text x="1084.6" y="459.1" class="mo" font-size="14.5" fill="#3a3a3a" textLength="91.8" lengthAdjust="spacingAndGlyphs">Predicted</text>
</g>
<rect x="915" y="829.2" width="405.5" height="20.6" fill="#f0f0f0"/>
<rect x="937.5" y="830.5" width="285" height="18" fill="#f6ecf6"/>
<path d="M928.8 834.8L923.4 838.8L928.8 842.8" fill="none" stroke="#5a4e62" stroke-width="1.8"/>
<path d="M1307.6 834.8L1313 838.8L1307.6 842.8" fill="none" stroke="#5a4e62" stroke-width="1.8"/>
</svg>
</body>
</html>
